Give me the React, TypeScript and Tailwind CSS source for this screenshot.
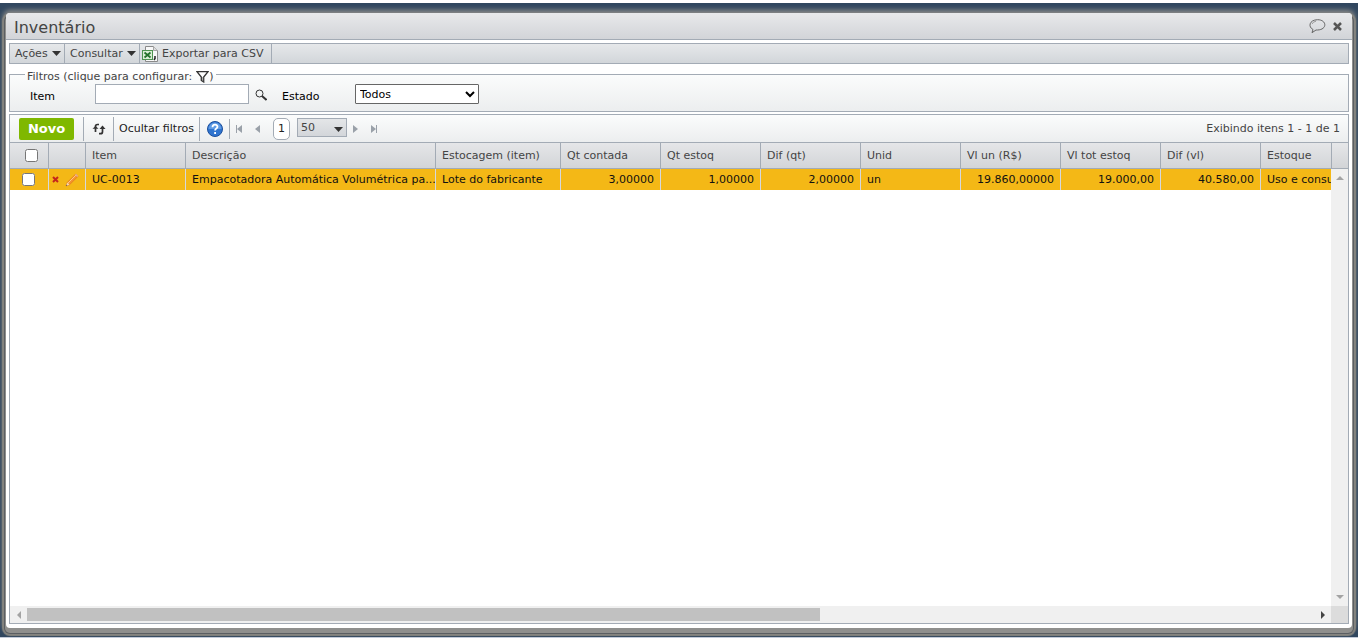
import React, { useState } from 'react';

interface Column {
  label: string;
  width: number;
  align?: 'right';
}

const columns: Column[] = [
  { label: 'Item', width: 100 },
  { label: 'Descrição', width: 250 },
  { label: 'Estocagem (item)', width: 125 },
  { label: 'Qt contada', width: 100, align: 'right' },
  { label: 'Qt estoq', width: 100, align: 'right' },
  { label: 'Dif (qt)', width: 100, align: 'right' },
  { label: 'Unid', width: 100 },
  { label: 'Vl un (R$)', width: 100, align: 'right' },
  { label: 'Vl tot estoq', width: 100, align: 'right' },
  { label: 'Dif (vl)', width: 100, align: 'right' },
  { label: 'Estoque', width: 100 },
];

const rows = [
  [
    'UC-0013',
    'Empacotadora Automática Volumétrica pa...',
    'Lote do fabricante',
    '3,00000',
    '1,00000',
    '2,00000',
    'un',
    '19.860,00000',
    '19.000,00',
    '40.580,00',
    'Uso e consumo',
  ],
];

const CaretDown = () => (
  <svg width="9" height="5" viewBox="0 0 9 5" className="shrink-0">
    <path d="M0 0h9L4.5 5z" fill="#333" />
  </svg>
);

const CsvIcon = () => (
  <svg width="16" height="16" viewBox="0 0 16 16" className="shrink-0">
    <path d="M3.5.5h8l4 4v11h-12z" fill="#f8f8f8" stroke="#8a8a8a" />
    <path d="M11.5.5v4h4" fill="#ddd" stroke="#a5a5a5" />
    <rect x=".5" y="4.500" width="10" height="9" fill="#dcefd6" stroke="#4f9350" />
    <path d="M2.500 6.500l6 5M8.500 6.500l-6 5" stroke="#24712a" strokeWidth="1.800" />
    <path d="M13 10v2.500l-1 1.500" stroke="#222" strokeWidth="1.500" fill="none" />
  </svg>
);

const FunnelIcon = () => (
  <svg width="13" height="12" viewBox="0 0 13 12">
    <path d="M1 .7h11L7.700 6v5L5.300 9.500V6z" fill="#fff" stroke="#333" strokeWidth="1.300" />
    <path d="M7 6v4.500" stroke="#555" />
  </svg>
);

const SearchIcon = () => (
  <svg width="12" height="12" viewBox="0 0 12 12" fill="none" stroke="#333">
    <circle cx="4.500" cy="4.500" r="3.500" />
    <path d="M7 7l4.500 4" strokeWidth="2" />
  </svg>
);

const RefreshIcon = () => (
  <svg width="14" height="12" viewBox="0 0 14 12" fill="none" stroke="#333" strokeWidth="1.700">
    <path d="M7 1.500H5.500q-2 0-2 2V9" />
    <path d="M.5 5.800h6L3.500 3z" fill="#333" stroke="none" />
    <path d="M7 10.700h1.500q2 0 2-2V4" />
    <path d="M7.500 6h6L10.500 2.500z" fill="#333" stroke="none" />
  </svg>
);

const HelpIcon = () => (
  <svg width="16" height="16" viewBox="0 0 16 16">
    <circle cx="8" cy="8" r="7.500" fill="#2f74cf" stroke="#1c4f9c" />
    <path d="M1.500 8a6.500 6.500 0 0113 0z" fill="#5f9be4" />
    <path d="M5.500 6.200c0-3.300 5-3.300 5-.4 0 1.900-2.400 1.700-2.400 3.700M8.100 11v2" fill="none" stroke="#fff" strokeWidth="1.800" />
  </svg>
);

const BalloonIcon = () => (
  <svg width="17" height="15" viewBox="0 0 17 15" fill="none" stroke="#666">
    <path d="M4 10.500C-1 8 0 1 8.500.700c9.500 0 10 10 0 10.300H7L3 13.700z" />
    <path d="M3 5q1-2.300 4-2.800" stroke="#999" />
  </svg>
);

const PencilIcon = () => (
  <svg width="14" height="14" viewBox="0 0 14 14">
    <path d="M1 13l1.200-3.500L10.500 1.200l2.300 2.300L4.500 11.800z" fill="#f59331" stroke="#dd6f16" strokeWidth=".6" />
    <path d="M3 10l8-8" stroke="#ffc684" />
    <path d="M10 1.700l1-1 2.300 2.300-1 1z" fill="#e4a78f" />
    <path d="M1 13l1.200-3.500 2.300 2.300z" fill="#f4d9ae" />
    <path d="M1 13l.5-1.400.9.9z" fill="#444" />
  </svg>
);

const PagerIcon = ({ back, edge }: { back?: boolean; edge?: boolean }) => (
  <svg width="8" height="8" viewBox="0 0 8 8" fill="#9aa1a9" className={back ? 'rotate-180' : ''}>
    <path d="M1 0l5 4-5 4z" />
    {edge && <path d="M6 0h1v8H6z" />}
  </svg>
);

const Divider = ({ tall }: { tall?: boolean }) => (
  <span className={`w-px shrink-0 bg-[#a3abb5] ${tall ? 'h-5' : 'h-6'}`} />
);

function MenuBar() {
  return (
    <div className="flex h-[21px] items-stretch border border-[#a3abb5] bg-linear-to-b from-[#e6e8ea] to-[#d2d6da] text-[#444]">
      <button type="button" className="flex w-[55px] items-center gap-1 border-r border-[#a3abb5] pl-[5px]">
        Ações <CaretDown />
      </button>
      <button type="button" className="flex w-[75px] items-center gap-1 border-r border-[#a3abb5] pl-[5px]">
        Consultar <CaretDown />
      </button>
      <button type="button" className="flex w-[132px] items-center gap-1 border-r border-[#a3abb5] pl-[2px]">
        <CsvIcon /> Exportar para CSV
      </button>
    </div>
  );
}

function Filters() {
  const [item, setItem] = useState('');
  return (
    <fieldset className="mt-[2px] border border-[#a3abb5] bg-linear-to-b from-[#fbfcfc] to-[#eceeef] px-5">
      <legend className="-ml-[5px] flex h-[17px] items-center px-[2px] pt-1 text-[#444]">
        Filtros (clique para configurar:
        <button type="button" aria-label="Configurar filtros" className="ml-1">
          <FunnelIcon />
        </button>
        )
      </legend>
      <div className="flex h-7 items-start pt-px text-black">
        <label htmlFor="item" className="w-[65px] pt-[6px]">Item</label>
        <input
          id="item"
          type="text"
          value={item}
          onChange={(e) => setItem(e.target.value)}
          className="h-5 w-[154px] border border-[#a3abb5] bg-white px-1"
        />
        <button type="button" aria-label="Pesquisar item" className="ml-[6px] pt-[5px]">
          <SearchIcon />
        </button>
        <label htmlFor="estado" className="ml-[15px] w-[73px] pt-[6px]">Estado</label>
        <select id="estado" className="h-5 w-[124px] rounded-[1px] border border-[#666] bg-white">
          <option>Todos</option>
        </select>
      </div>
    </fieldset>
  );
}

function GridToolbar() {
  return (
    <div className="flex h-[27px] items-center bg-linear-to-b from-[#fbfcfc] to-[#eceeef] pl-[9px] text-[#222]">
      <button type="button" className="mr-[9px] h-[22px] w-[55px] rounded-[2px] bg-[#7fb800] text-[13px] font-bold text-white">
        Novo
      </button>
      <Divider />
      <button type="button" aria-label="Atualizar" className="flex w-[29px] justify-center">
        <RefreshIcon />
      </button>
      <Divider />
      <button type="button" className="w-[85px] text-center whitespace-nowrap">Ocultar filtros</button>
      <Divider />
      <button type="button" aria-label="Ajuda" className="flex w-[29px] justify-center">
        <HelpIcon />
      </button>
      <Divider tall />
      <button type="button" aria-label="Primeira página" className="ml-[5px]"><PagerIcon back edge /></button>
      <button type="button" aria-label="Página anterior" className="ml-[10px]"><PagerIcon back /></button>
      <span className="ml-[12px] flex h-[22px] w-[17px] items-center justify-center rounded-[5px] border border-[#a3abb5] bg-white">1</span>
      <span className="relative ml-[7px] flex">
        <select
          aria-label="Itens por página"
          className="mb-[2px] h-[19px] w-[50px] appearance-none border border-[#a3abb5] bg-linear-to-b from-[#e4e6e8] to-[#d3d6da] pl-[3px] text-[#444]"
        >
          <option>50</option>
        </select>
        <span className="pointer-events-none absolute right-1 bottom-[7px]"><CaretDown /></span>
      </span>
      <button type="button" aria-label="Próxima página" className="ml-[5px]"><PagerIcon /></button>
      <button type="button" aria-label="Última página" className="ml-[10px]"><PagerIcon edge /></button>
      <span className="ml-auto pr-2 text-[#444]">Exibindo itens 1 - 1 de 1</span>
    </div>
  );
}

function ItemsTable() {
  return (
    <table className="w-[1351px] table-fixed border-separate border-spacing-0">
      <colgroup>
        <col className="w-[39px]" />
        <col className="w-[37px]" />
        {columns.map((col) => (
          <col key={col.label} style={{ width: col.width }} />
        ))}
      </colgroup>
      <thead>
        <tr className="h-[27px] bg-linear-to-b from-[#e6e7e9] to-[#d2d4d7] text-left text-[#444]">
          <th className="border-y border-r border-[#a3abb5] pl-[15px]">
            <input type="checkbox" aria-label="Selecionar todos" className="block size-[13px]" />
          </th>
          <th className="border-y border-r border-[#a3abb5]" />
          {columns.map((col) => (
            <th key={col.label} className="border-y border-r border-[#a3abb5] px-[6px] font-normal whitespace-nowrap">
              {col.label}
            </th>
          ))}
        </tr>
      </thead>
      <tbody>
        {rows.map((row) => (
          <tr key={row[0]} className="h-[21px] bg-[#f4b816] text-[#111]">
            <td className="border-r border-[#d5d8dc] pl-3">
              <input type="checkbox" aria-label={`Selecionar ${row[0]}`} className="block size-[13px]" />
            </td>
            <td className="border-r border-[#d5d8dc]">
              <div className="flex items-center gap-[6px] pl-[3px]">
                <button type="button" aria-label="Excluir">
                  <svg width="7" height="7" viewBox="0 0 7 7">
                    <path d="M1 1l5 5M6 1L1 6" stroke="#c4261d" strokeWidth="2" />
                  </svg>
                </button>
                <button type="button" aria-label="Editar"><PencilIcon /></button>
              </div>
            </td>
            {row.map((value, i) => (
              <td
                key={columns[i].label}
                className={`overflow-hidden border-r border-[#d5d8dc] pl-[6px] whitespace-nowrap ${columns[i].align ? 'pr-[6px] text-right' : ''}`}
              >
                {value}
              </td>
            ))}
          </tr>
        ))}
      </tbody>
    </table>
  );
}

export default function App() {
  return (
    <div className="flex min-h-screen flex-col border-t-[3px] border-b border-t-white border-b-[#c3cad8] bg-[#31475f] px-[6px] pt-[10px] pb-[9px] font-['DejaVu_Sans','Verdana',sans-serif] text-[11px] leading-[13px]">
      <main className="flex min-w-0 flex-1 flex-col rounded-[4px] bg-white shadow-[0_4px_0_1px_#8f8f8d,0_4px_0_2px_#5b5f63,0_4px_1px_4px_#85847f,0_0_5px_3px_#8b8b89]">
        <header className="flex h-[27px] items-center rounded-t-[4px] border-b border-[#a3abb5] bg-linear-to-b from-[#e8e9eb] to-[#d2d4d8] pr-[10px] pl-2">
          <h1 className="pt-1 text-[16px] leading-5 text-[#444]">Inventário</h1>
          <button type="button" aria-label="Comentários" className="ml-auto">
            <BalloonIcon />
          </button>
          <button type="button" aria-label="Fechar" className="ml-[7px]">
            <svg width="9" height="9" viewBox="0 0 9 9">
              <path d="M1 1l7 7M8 1L1 8" stroke="#555" strokeWidth="2.500" />
            </svg>
          </button>
        </header>
        <div className="flex flex-1 flex-col px-[3px] pt-[3px] pb-1">
          <MenuBar />
          <Filters />
          <section className="mt-[2px] flex flex-1 flex-col border border-[#a3abb5]">
            <GridToolbar />
            <div className="flex flex-1">
              <div className="min-w-0 flex-1 overflow-hidden">
                <ItemsTable />
              </div>
              <div className="flex w-[17px] flex-col bg-[#f0f0f0]">
                <div className="h-[27px] border-y border-l border-[#a3abb5] bg-linear-to-b from-[#e6e7e9] to-[#d2d4d7]" />
                <div className="flex flex-1 flex-col items-center justify-between py-[7px]">
                  <svg width="8" height="4" viewBox="0 0 8 4" fill="#a3a3a3"><path d="M0 4l4-4 4 4z" /></svg>
                  <svg width="8" height="4" viewBox="0 0 8 4" fill="#a3a3a3"><path d="M0 0h8L4 4z" /></svg>
                </div>
              </div>
            </div>
            <div className="flex h-[17px] bg-[#f0f0f0]">
              <div className="flex flex-1 items-center">
                <span className="flex w-[17px] justify-center">
                  <svg width="4" height="8" viewBox="0 0 4 8" fill="#a3a3a3"><path d="M4 0v8L0 4z" /></svg>
                </span>
                <div className="flex-1">
                  <div className="h-[13px] w-[61.6%] bg-[#c1c1c1]" />
                </div>
                <span className="flex w-[17px] justify-center">
                  <svg width="4" height="8" viewBox="0 0 4 8" fill="#444"><path d="M0 0v8l4-4z" /></svg>
                </span>
              </div>
              <div className="w-[17px] bg-[#dcdcdc]" />
            </div>
          </section>
        </div>
      </main>
    </div>
  );
}
